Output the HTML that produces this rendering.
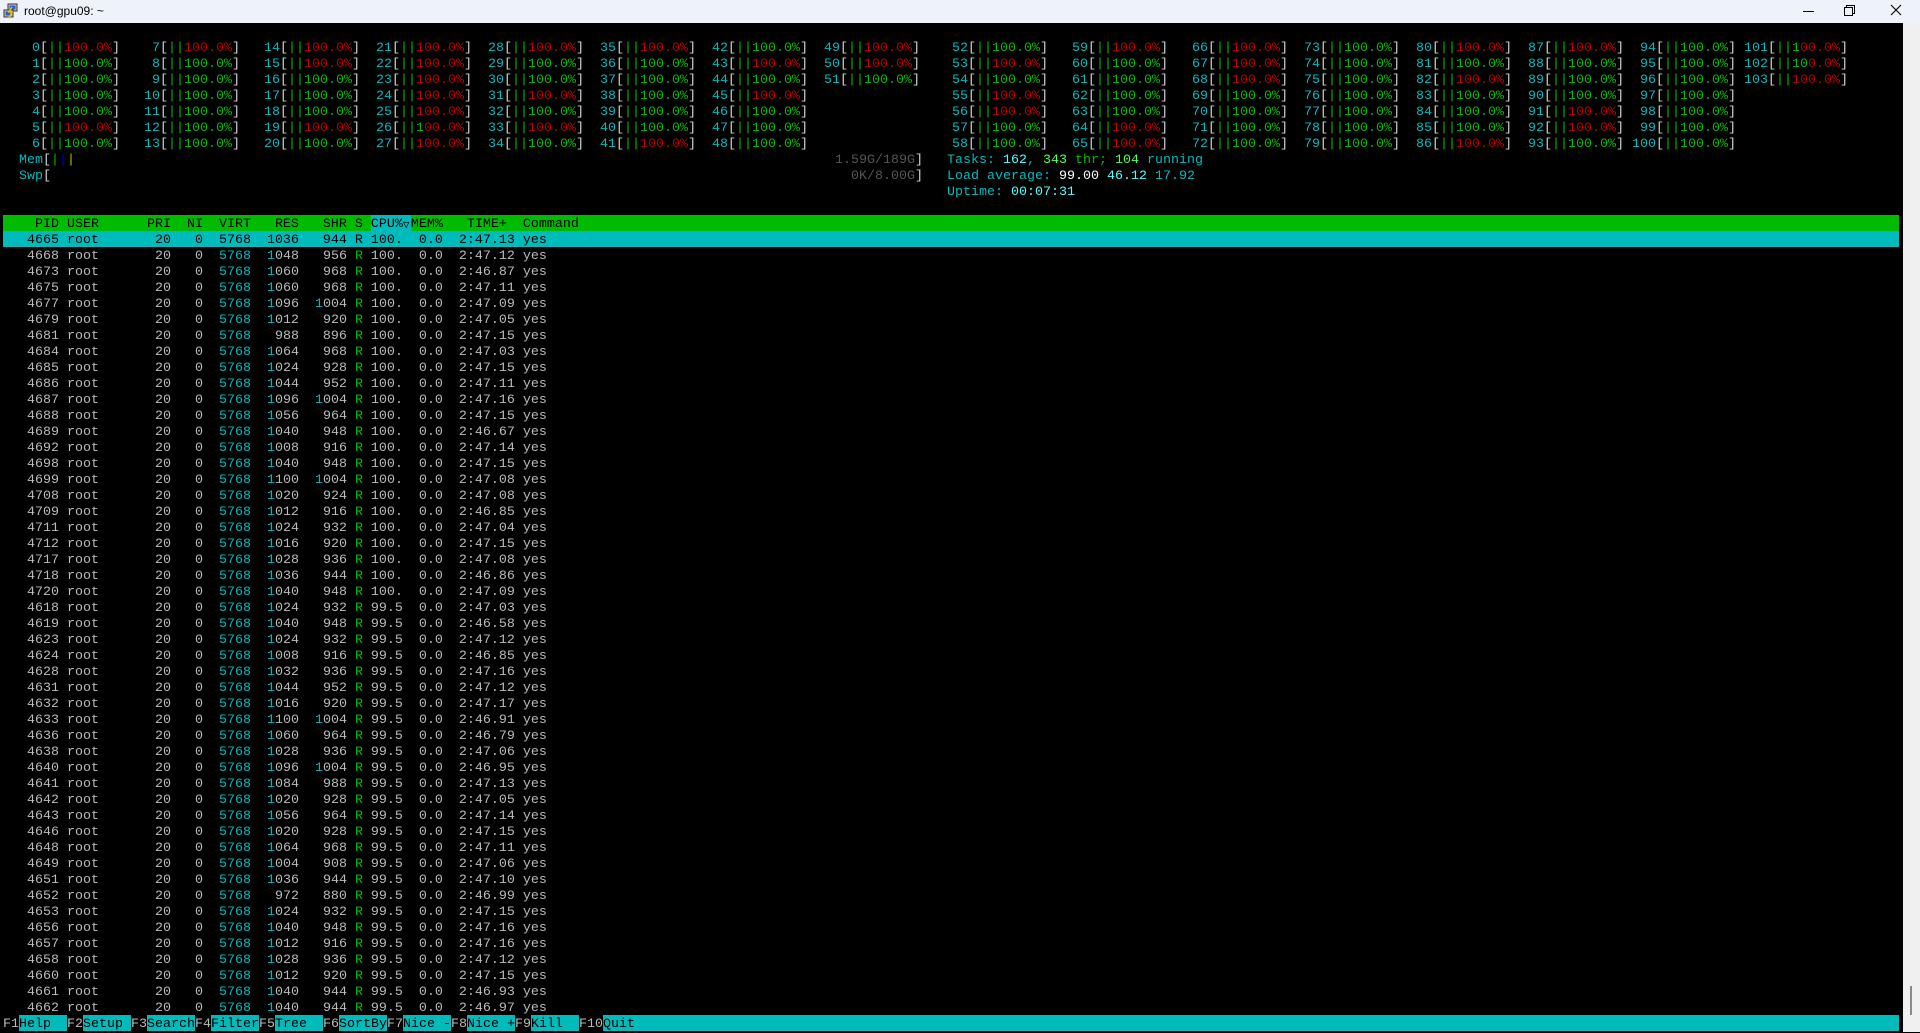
<!DOCTYPE html>
<html><head><meta charset="utf-8"><style>
*{margin:0;padding:0}
body{width:1920px;height:1032px;background:#000;overflow:hidden;position:relative;font:13.333px "Liberation Mono","DejaVu Sans Mono",monospace;color:#bbbbbb}
#tb{position:absolute;left:0;top:0;width:1920px;height:23px;background:#eef3f9}
#tt{position:absolute;left:24px;top:4px;font:12px "Liberation Sans",sans-serif;color:#000}
#sb{position:absolute;left:1903px;top:23px;width:17px;height:1009px;background:#f0f0f0}
#th{position:absolute;left:1910px;top:986px;width:2px;height:29px;background:#8a8a8a}
.r{position:absolute;top:0;height:16px;line-height:16px;white-space:pre}
m{position:absolute;top:2px;white-space:pre;color:#d0d4da}
c{color:#00bbbb}g{color:#00bb00}r{color:#bb0000}
y{color:#bbbb00}bl{color:#0000bb}d{color:#555}w{color:#fff}bc{color:#55ffff}bg{color:#55ff55}
.a0{left:16px}.a1{left:136px}.a2{left:256px}.a3{left:368px}.a4{left:480px}.a5{left:592px}.a6{left:704px}.a7{left:816px}
.b0{left:944px}.b1{left:1064px}.b2{left:1184px}.b3{left:1296px}.b4{left:1408px}.b5{left:1520px}.b6{left:1632px}.b7{left:1744px}
#list{position:absolute;left:3px;top:215px;width:1896px}
#list div{height:14px;padding-top:2px;line-height:16px;white-space:pre}
.hd{background:#00bb00;color:#000}
.sel{background:#00bbbb;color:#000}
.hc{background:#00bbbb;display:inline-block;height:16px;margin-top:-2px;padding-top:2px;vertical-align:top;line-height:16px;box-sizing:border-box}
.tri{display:inline-block;width:8px;overflow:hidden;vertical-align:top;font-family:"DejaVu Sans Mono",monospace;font-size:11px}
#fb{position:absolute;left:3px;top:1015px;width:1896px;height:14px;padding-top:2px;line-height:16px;white-space:pre;background:#00bbbb;color:#000}
#fb k{background:#000;color:#bbbbbb;display:inline-block;height:16px;margin-top:-2px;padding-top:2px;box-sizing:border-box;vertical-align:top}
</style></head><body>
<div id="tb">
<svg style="position:absolute;left:3px;top:3px" width="16" height="16" viewBox="0 0 16 16"><rect x="5" y="1" width="9" height="7" fill="#c8c8c8" stroke="#333"/><rect x="6.5" y="2.5" width="6" height="4" fill="#2a5bd7"/><rect x="1" y="7" width="9" height="7" fill="#c8c8c8" stroke="#333"/><rect x="2.5" y="8.5" width="6" height="4" fill="#2a5bd7"/><path d="M9 4 L6 9 L9 9 L6 15" stroke="#e8c000" stroke-width="1.6" fill="none"/></svg>
<div id="tt">root@gpu09: ~</div>
<svg style="position:absolute;left:1803px;top:5px" width="12" height="12"><line x1="0" y1="6.5" x2="11" y2="6.5" stroke="#000" stroke-width="1"/></svg>
<svg style="position:absolute;left:1843px;top:4px" width="14" height="14"><rect x="1.5" y="3.5" width="8" height="8" fill="none" stroke="#000"/><path d="M3.5 3.5 V1.5 H11.5 V9.5 H9.5" fill="none" stroke="#000"/></svg>
<svg style="position:absolute;left:1890px;top:4px" width="12" height="12"><path d="M1 1 L11 11 M11 1 L1 11" stroke="#000" stroke-width="1.1"/></svg>
</div>
<div id="sb"></div><div id="th"></div>

<div class="r" style="top:39px">
<m class=a0><c>  0</c>[<g>||</g><r>100.0%</r>]</m><m class=a1><c>  7</c>[<g>||</g><r>100.0%</r>]</m><m class=a2><c> 14</c>[<g>||</g><r>100.0%</r>]</m><m class=a3><c> 21</c>[<g>||</g><r>100.0%</r>]</m><m class=a4><c> 28</c>[<g>||</g><r>100.0%</r>]</m><m class=a5><c> 35</c>[<g>||</g><r>100.0%</r>]</m><m class=a6><c> 42</c>[<g>||100.0%</g>]</m><m class=a7><c> 49</c>[<g>||</g><r>100.0%</r>]</m>
<m class=b0><c> 52</c>[<g>||100.0%</g>]</m><m class=b1><c> 59</c>[<g>||</g><r>100.0%</r>]</m><m class=b2><c> 66</c>[<g>||</g><r>100.0%</r>]</m><m class=b3><c> 73</c>[<g>||100.0%</g>]</m><m class=b4><c> 80</c>[<g>||</g><r>100.0%</r>]</m><m class=b5><c> 87</c>[<g>||</g><r>100.0%</r>]</m><m class=b6><c> 94</c>[<g>||100.0%</g>]</m><m class=b7><c>101</c>[<g>||1</g><r>00.0%</r>]</m>
</div>
<div class="r" style="top:55px">
<m class=a0><c>  1</c>[<g>||100.0%</g>]</m><m class=a1><c>  8</c>[<g>||100.0%</g>]</m><m class=a2><c> 15</c>[<g>||</g><r>100.0%</r>]</m><m class=a3><c> 22</c>[<g>||</g><r>100.0%</r>]</m><m class=a4><c> 29</c>[<g>||100.0%</g>]</m><m class=a5><c> 36</c>[<g>||100.0%</g>]</m><m class=a6><c> 43</c>[<g>||</g><r>100.0%</r>]</m><m class=a7><c> 50</c>[<g>||</g><r>100.0%</r>]</m>
<m class=b0><c> 53</c>[<g>||</g><r>100.0%</r>]</m><m class=b1><c> 60</c>[<g>||100.0%</g>]</m><m class=b2><c> 67</c>[<g>||</g><r>100.0%</r>]</m><m class=b3><c> 74</c>[<g>||100.0%</g>]</m><m class=b4><c> 81</c>[<g>||100.0%</g>]</m><m class=b5><c> 88</c>[<g>||100.0%</g>]</m><m class=b6><c> 95</c>[<g>||100.0%</g>]</m><m class=b7><c>102</c>[<g>||10</g><r>0.0%</r>]</m>
</div>
<div class="r" style="top:71px">
<m class=a0><c>  2</c>[<g>||100.0%</g>]</m><m class=a1><c>  9</c>[<g>||100.0%</g>]</m><m class=a2><c> 16</c>[<g>||100.0%</g>]</m><m class=a3><c> 23</c>[<g>||</g><r>100.0%</r>]</m><m class=a4><c> 30</c>[<g>||100.0%</g>]</m><m class=a5><c> 37</c>[<g>||100.0%</g>]</m><m class=a6><c> 44</c>[<g>||100.0%</g>]</m><m class=a7><c> 51</c>[<g>||100.0%</g>]</m>
<m class=b0><c> 54</c>[<g>||100.0%</g>]</m><m class=b1><c> 61</c>[<g>||100.0%</g>]</m><m class=b2><c> 68</c>[<g>||</g><r>100.0%</r>]</m><m class=b3><c> 75</c>[<g>||100.0%</g>]</m><m class=b4><c> 82</c>[<g>||</g><r>100.0%</r>]</m><m class=b5><c> 89</c>[<g>||100.0%</g>]</m><m class=b6><c> 96</c>[<g>||100.0%</g>]</m><m class=b7><c>103</c>[<g>||</g><r>100.0%</r>]</m>
</div>
<div class="r" style="top:87px">
<m class=a0><c>  3</c>[<g>||100.0%</g>]</m><m class=a1><c> 10</c>[<g>||100.0%</g>]</m><m class=a2><c> 17</c>[<g>||100.0%</g>]</m><m class=a3><c> 24</c>[<g>||</g><r>100.0%</r>]</m><m class=a4><c> 31</c>[<g>||</g><r>100.0%</r>]</m><m class=a5><c> 38</c>[<g>||100.0%</g>]</m><m class=a6><c> 45</c>[<g>||</g><r>100.0%</r>]</m>
<m class=b0><c> 55</c>[<g>||</g><r>100.0%</r>]</m><m class=b1><c> 62</c>[<g>||100.0%</g>]</m><m class=b2><c> 69</c>[<g>||100.0%</g>]</m><m class=b3><c> 76</c>[<g>||100.0%</g>]</m><m class=b4><c> 83</c>[<g>||100.0%</g>]</m><m class=b5><c> 90</c>[<g>||100.0%</g>]</m><m class=b6><c> 97</c>[<g>||100.0%</g>]</m>
</div>
<div class="r" style="top:103px">
<m class=a0><c>  4</c>[<g>||100.0%</g>]</m><m class=a1><c> 11</c>[<g>||100.0%</g>]</m><m class=a2><c> 18</c>[<g>||100.0%</g>]</m><m class=a3><c> 25</c>[<g>||</g><r>100.0%</r>]</m><m class=a4><c> 32</c>[<g>||100.0%</g>]</m><m class=a5><c> 39</c>[<g>||100.0%</g>]</m><m class=a6><c> 46</c>[<g>||100.0%</g>]</m>
<m class=b0><c> 56</c>[<g>||</g><r>100.0%</r>]</m><m class=b1><c> 63</c>[<g>||100.0%</g>]</m><m class=b2><c> 70</c>[<g>||100.0%</g>]</m><m class=b3><c> 77</c>[<g>||100.0%</g>]</m><m class=b4><c> 84</c>[<g>||100.0%</g>]</m><m class=b5><c> 91</c>[<g>||</g><r>100.0%</r>]</m><m class=b6><c> 98</c>[<g>||100.0%</g>]</m>
</div>
<div class="r" style="top:119px">
<m class=a0><c>  5</c>[<g>||</g><r>100.0%</r>]</m><m class=a1><c> 12</c>[<g>||100.0%</g>]</m><m class=a2><c> 19</c>[<g>||</g><r>100.0%</r>]</m><m class=a3><c> 26</c>[<g>||1</g><r>00.0%</r>]</m><m class=a4><c> 33</c>[<g>||</g><r>100.0%</r>]</m><m class=a5><c> 40</c>[<g>||100.0%</g>]</m><m class=a6><c> 47</c>[<g>||100.0%</g>]</m>
<m class=b0><c> 57</c>[<g>||100.0%</g>]</m><m class=b1><c> 64</c>[<g>||</g><r>100.0%</r>]</m><m class=b2><c> 71</c>[<g>||100.0%</g>]</m><m class=b3><c> 78</c>[<g>||100.0%</g>]</m><m class=b4><c> 85</c>[<g>||100.0%</g>]</m><m class=b5><c> 92</c>[<g>||</g><r>100.0%</r>]</m><m class=b6><c> 99</c>[<g>||100.0%</g>]</m>
</div>
<div class="r" style="top:135px">
<m class=a0><c>  6</c>[<g>||100.0%</g>]</m><m class=a1><c> 13</c>[<g>||100.0%</g>]</m><m class=a2><c> 20</c>[<g>||100.0%</g>]</m><m class=a3><c> 27</c>[<g>||</g><r>100.0%</r>]</m><m class=a4><c> 34</c>[<g>||100.0%</g>]</m><m class=a5><c> 41</c>[<g>||</g><r>100.0%</r>]</m><m class=a6><c> 48</c>[<g>||100.0%</g>]</m>
<m class=b0><c> 58</c>[<g>||100.0%</g>]</m><m class=b1><c> 65</c>[<g>||</g><r>100.0%</r>]</m><m class=b2><c> 72</c>[<g>||100.0%</g>]</m><m class=b3><c> 79</c>[<g>||100.0%</g>]</m><m class=b4><c> 86</c>[<g>||</g><r>100.0%</r>]</m><m class=b5><c> 93</c>[<g>||100.0%</g>]</m><m class=b6><c>100</c>[<g>||100.0%</g>]</m>
</div>

<div class="r" style="top:151px"><m style="left:19px"><c>Mem</c>[<g>|</g><bl>|</bl><y>|</y></m><m style="left:835px"><d>1.59G/189G</d>]</m><m style="left:947px"><c>Tasks: </c><bc>162</bc><c>, </c><bg>343</bg><g> thr; </g><bg>104</bg><c> running</c></m></div>
<div class="r" style="top:167px"><m style="left:19px"><c>Swp</c>[</m><m style="left:851px"><d>0K/8.00G</d>]</m><m style="left:947px"><c>Load average: </c><w>99.00 </w><bc>46.12 </bc><c>17.92</c></m></div>
<div class="r" style="top:183px"><m style="left:947px"><c>Uptime: </c><bc>00:07:31</bc></m></div>

<div id="list">
<div class="hd">    PID USER      PRI  NI  VIRT   RES   SHR S <span class="hc">CPU%<span class="tri">▽</span></span>MEM%   TIME+  Command</div>
<div class="sel">   4665 root       20   0  5768  1036   944 R 100.  0.0  2:47.13 yes</div>
<div>   4668 root       20   0  <c>5768</c>  <c>1</c>048   956 <g>R</g> 100.  0.0  2:47.12 yes</div>
<div>   4673 root       20   0  <c>5768</c>  <c>1</c>060   968 <g>R</g> 100.  0.0  2:46.87 yes</div>
<div>   4675 root       20   0  <c>5768</c>  <c>1</c>060   968 <g>R</g> 100.  0.0  2:47.11 yes</div>
<div>   4677 root       20   0  <c>5768</c>  <c>1</c>096  <c>1</c>004 <g>R</g> 100.  0.0  2:47.09 yes</div>
<div>   4679 root       20   0  <c>5768</c>  <c>1</c>012   920 <g>R</g> 100.  0.0  2:47.05 yes</div>
<div>   4681 root       20   0  <c>5768</c>   988   896 <g>R</g> 100.  0.0  2:47.15 yes</div>
<div>   4684 root       20   0  <c>5768</c>  <c>1</c>064   968 <g>R</g> 100.  0.0  2:47.03 yes</div>
<div>   4685 root       20   0  <c>5768</c>  <c>1</c>024   928 <g>R</g> 100.  0.0  2:47.15 yes</div>
<div>   4686 root       20   0  <c>5768</c>  <c>1</c>044   952 <g>R</g> 100.  0.0  2:47.11 yes</div>
<div>   4687 root       20   0  <c>5768</c>  <c>1</c>096  <c>1</c>004 <g>R</g> 100.  0.0  2:47.16 yes</div>
<div>   4688 root       20   0  <c>5768</c>  <c>1</c>056   964 <g>R</g> 100.  0.0  2:47.15 yes</div>
<div>   4689 root       20   0  <c>5768</c>  <c>1</c>040   948 <g>R</g> 100.  0.0  2:46.67 yes</div>
<div>   4692 root       20   0  <c>5768</c>  <c>1</c>008   916 <g>R</g> 100.  0.0  2:47.14 yes</div>
<div>   4698 root       20   0  <c>5768</c>  <c>1</c>040   948 <g>R</g> 100.  0.0  2:47.15 yes</div>
<div>   4699 root       20   0  <c>5768</c>  <c>1</c>100  <c>1</c>004 <g>R</g> 100.  0.0  2:47.08 yes</div>
<div>   4708 root       20   0  <c>5768</c>  <c>1</c>020   924 <g>R</g> 100.  0.0  2:47.08 yes</div>
<div>   4709 root       20   0  <c>5768</c>  <c>1</c>012   916 <g>R</g> 100.  0.0  2:46.85 yes</div>
<div>   4711 root       20   0  <c>5768</c>  <c>1</c>024   932 <g>R</g> 100.  0.0  2:47.04 yes</div>
<div>   4712 root       20   0  <c>5768</c>  <c>1</c>016   920 <g>R</g> 100.  0.0  2:47.15 yes</div>
<div>   4717 root       20   0  <c>5768</c>  <c>1</c>028   936 <g>R</g> 100.  0.0  2:47.08 yes</div>
<div>   4718 root       20   0  <c>5768</c>  <c>1</c>036   944 <g>R</g> 100.  0.0  2:46.86 yes</div>
<div>   4720 root       20   0  <c>5768</c>  <c>1</c>040   948 <g>R</g> 100.  0.0  2:47.09 yes</div>
<div>   4618 root       20   0  <c>5768</c>  <c>1</c>024   932 <g>R</g> 99.5  0.0  2:47.03 yes</div>
<div>   4619 root       20   0  <c>5768</c>  <c>1</c>040   948 <g>R</g> 99.5  0.0  2:46.58 yes</div>
<div>   4623 root       20   0  <c>5768</c>  <c>1</c>024   932 <g>R</g> 99.5  0.0  2:47.12 yes</div>
<div>   4624 root       20   0  <c>5768</c>  <c>1</c>008   916 <g>R</g> 99.5  0.0  2:46.85 yes</div>
<div>   4628 root       20   0  <c>5768</c>  <c>1</c>032   936 <g>R</g> 99.5  0.0  2:47.16 yes</div>
<div>   4631 root       20   0  <c>5768</c>  <c>1</c>044   952 <g>R</g> 99.5  0.0  2:47.12 yes</div>
<div>   4632 root       20   0  <c>5768</c>  <c>1</c>016   920 <g>R</g> 99.5  0.0  2:47.17 yes</div>
<div>   4633 root       20   0  <c>5768</c>  <c>1</c>100  <c>1</c>004 <g>R</g> 99.5  0.0  2:46.91 yes</div>
<div>   4636 root       20   0  <c>5768</c>  <c>1</c>060   964 <g>R</g> 99.5  0.0  2:46.79 yes</div>
<div>   4638 root       20   0  <c>5768</c>  <c>1</c>028   936 <g>R</g> 99.5  0.0  2:47.06 yes</div>
<div>   4640 root       20   0  <c>5768</c>  <c>1</c>096  <c>1</c>004 <g>R</g> 99.5  0.0  2:46.95 yes</div>
<div>   4641 root       20   0  <c>5768</c>  <c>1</c>084   988 <g>R</g> 99.5  0.0  2:47.13 yes</div>
<div>   4642 root       20   0  <c>5768</c>  <c>1</c>020   928 <g>R</g> 99.5  0.0  2:47.05 yes</div>
<div>   4643 root       20   0  <c>5768</c>  <c>1</c>056   964 <g>R</g> 99.5  0.0  2:47.14 yes</div>
<div>   4646 root       20   0  <c>5768</c>  <c>1</c>020   928 <g>R</g> 99.5  0.0  2:47.15 yes</div>
<div>   4648 root       20   0  <c>5768</c>  <c>1</c>064   968 <g>R</g> 99.5  0.0  2:47.11 yes</div>
<div>   4649 root       20   0  <c>5768</c>  <c>1</c>004   908 <g>R</g> 99.5  0.0  2:47.06 yes</div>
<div>   4651 root       20   0  <c>5768</c>  <c>1</c>036   944 <g>R</g> 99.5  0.0  2:47.10 yes</div>
<div>   4652 root       20   0  <c>5768</c>   972   880 <g>R</g> 99.5  0.0  2:46.99 yes</div>
<div>   4653 root       20   0  <c>5768</c>  <c>1</c>024   932 <g>R</g> 99.5  0.0  2:47.15 yes</div>
<div>   4656 root       20   0  <c>5768</c>  <c>1</c>040   948 <g>R</g> 99.5  0.0  2:47.16 yes</div>
<div>   4657 root       20   0  <c>5768</c>  <c>1</c>012   916 <g>R</g> 99.5  0.0  2:47.16 yes</div>
<div>   4658 root       20   0  <c>5768</c>  <c>1</c>028   936 <g>R</g> 99.5  0.0  2:47.12 yes</div>
<div>   4660 root       20   0  <c>5768</c>  <c>1</c>012   920 <g>R</g> 99.5  0.0  2:47.15 yes</div>
<div>   4661 root       20   0  <c>5768</c>  <c>1</c>040   944 <g>R</g> 99.5  0.0  2:46.93 yes</div>
<div>   4662 root       20   0  <c>5768</c>  <c>1</c>040   944 <g>R</g> 99.5  0.0  2:46.97 yes</div>
</div>

<div id="fb"><k>F1</k>Help  <k>F2</k>Setup <k>F3</k>Search<k>F4</k>Filter<k>F5</k>Tree  <k>F6</k>SortBy<k>F7</k>Nice -<k>F8</k>Nice +<k>F9</k>Kill  <k>F10</k>Quit</div>
</body></html>
